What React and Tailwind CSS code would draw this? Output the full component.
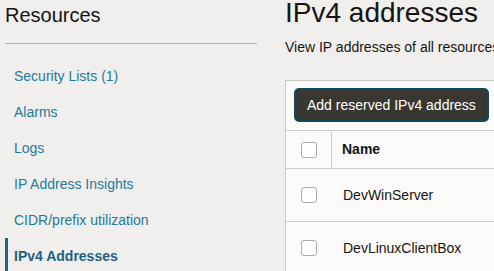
import React from 'react';

const navItems = [
  { label: 'Security Lists (1)' },
  { label: 'Alarms' },
  { label: 'Logs' },
  { label: 'IP Address Insights' },
  { label: 'CIDR/prefix utilization' },
  { label: 'IPv4 Addresses', active: true },
];

const rows = ['DevWinServer', 'DevLinuxClientBox'];

const Checkbox = () => (
  <span className="block w-4 h-4 rounded-[3px] border border-[#aeaba7] bg-white" />
);

const App = () => {
  return (
    <div
      className="flex h-[271px] w-[494px] overflow-hidden bg-[#f1efed] pl-[5px] text-[#161513]"
      style={{ fontFamily: '"Liberation Sans", Arial, sans-serif' }}
    >
      {/* Sidebar */}
      <aside className="w-[252px] shrink-0">
        <h2 className="pt-[3px] text-[20px] leading-[24px]">Resources</h2>
        <div className="mt-[16px] h-px bg-[#b7b4b0]" />
        <ul className="mt-[14px]">
          {navItems.map(item => (
            <li
              key={item.label}
              className={
                item.active
                  ? 'h-9 border-l-[3px] border-[#1e6480] pl-[6px] text-[14px] leading-9 font-bold text-[#1d6180]'
                  : 'h-9 border-l-[3px] border-transparent pl-[6px] text-[14px] leading-9 text-[#247a9c]'
              }
            >
              {item.label}
            </li>
          ))}
        </ul>
      </aside>

      {/* Main */}
      <main className="ml-[28px] w-[600px] shrink-0">
        <h1 className="text-[28px] leading-[26px]">IPv4 addresses</h1>
        <p className="mt-[11px] text-[14px] leading-5 whitespace-nowrap">
          View IP addresses of all resources
        </p>
        <div className="mt-[23px] border border-[#c9c6c2] bg-[#fcfbfa]">
          <div className="px-[8px] pt-[7px] pb-[8px]">
            <button className="h-[34px] rounded-[5px] border-2 border-[#0f4a5c] bg-[#3a3632] px-[11px] text-[14px] text-white">
              Add reserved IPv4 address
            </button>
          </div>
          <div className="border-t border-[#cdcac6]">
            <div className="flex h-[37px] items-center">
              <div className="flex h-full w-[46px] items-center justify-center border-r border-[#cdcac6]">
                <Checkbox />
              </div>
              <div className="pl-[10px] text-[14px] font-bold">Name</div>
            </div>
            {rows.map(name => (
              <div key={name} className="flex h-[53px] items-center border-t border-[#cdcac6]">
                <div className="flex w-[46px] items-center justify-center">
                  <Checkbox />
                </div>
                <div className="pl-[11px] text-[14px]">{name}</div>
              </div>
            ))}
          </div>
        </div>
      </main>
    </div>
  );
};

export default App;
